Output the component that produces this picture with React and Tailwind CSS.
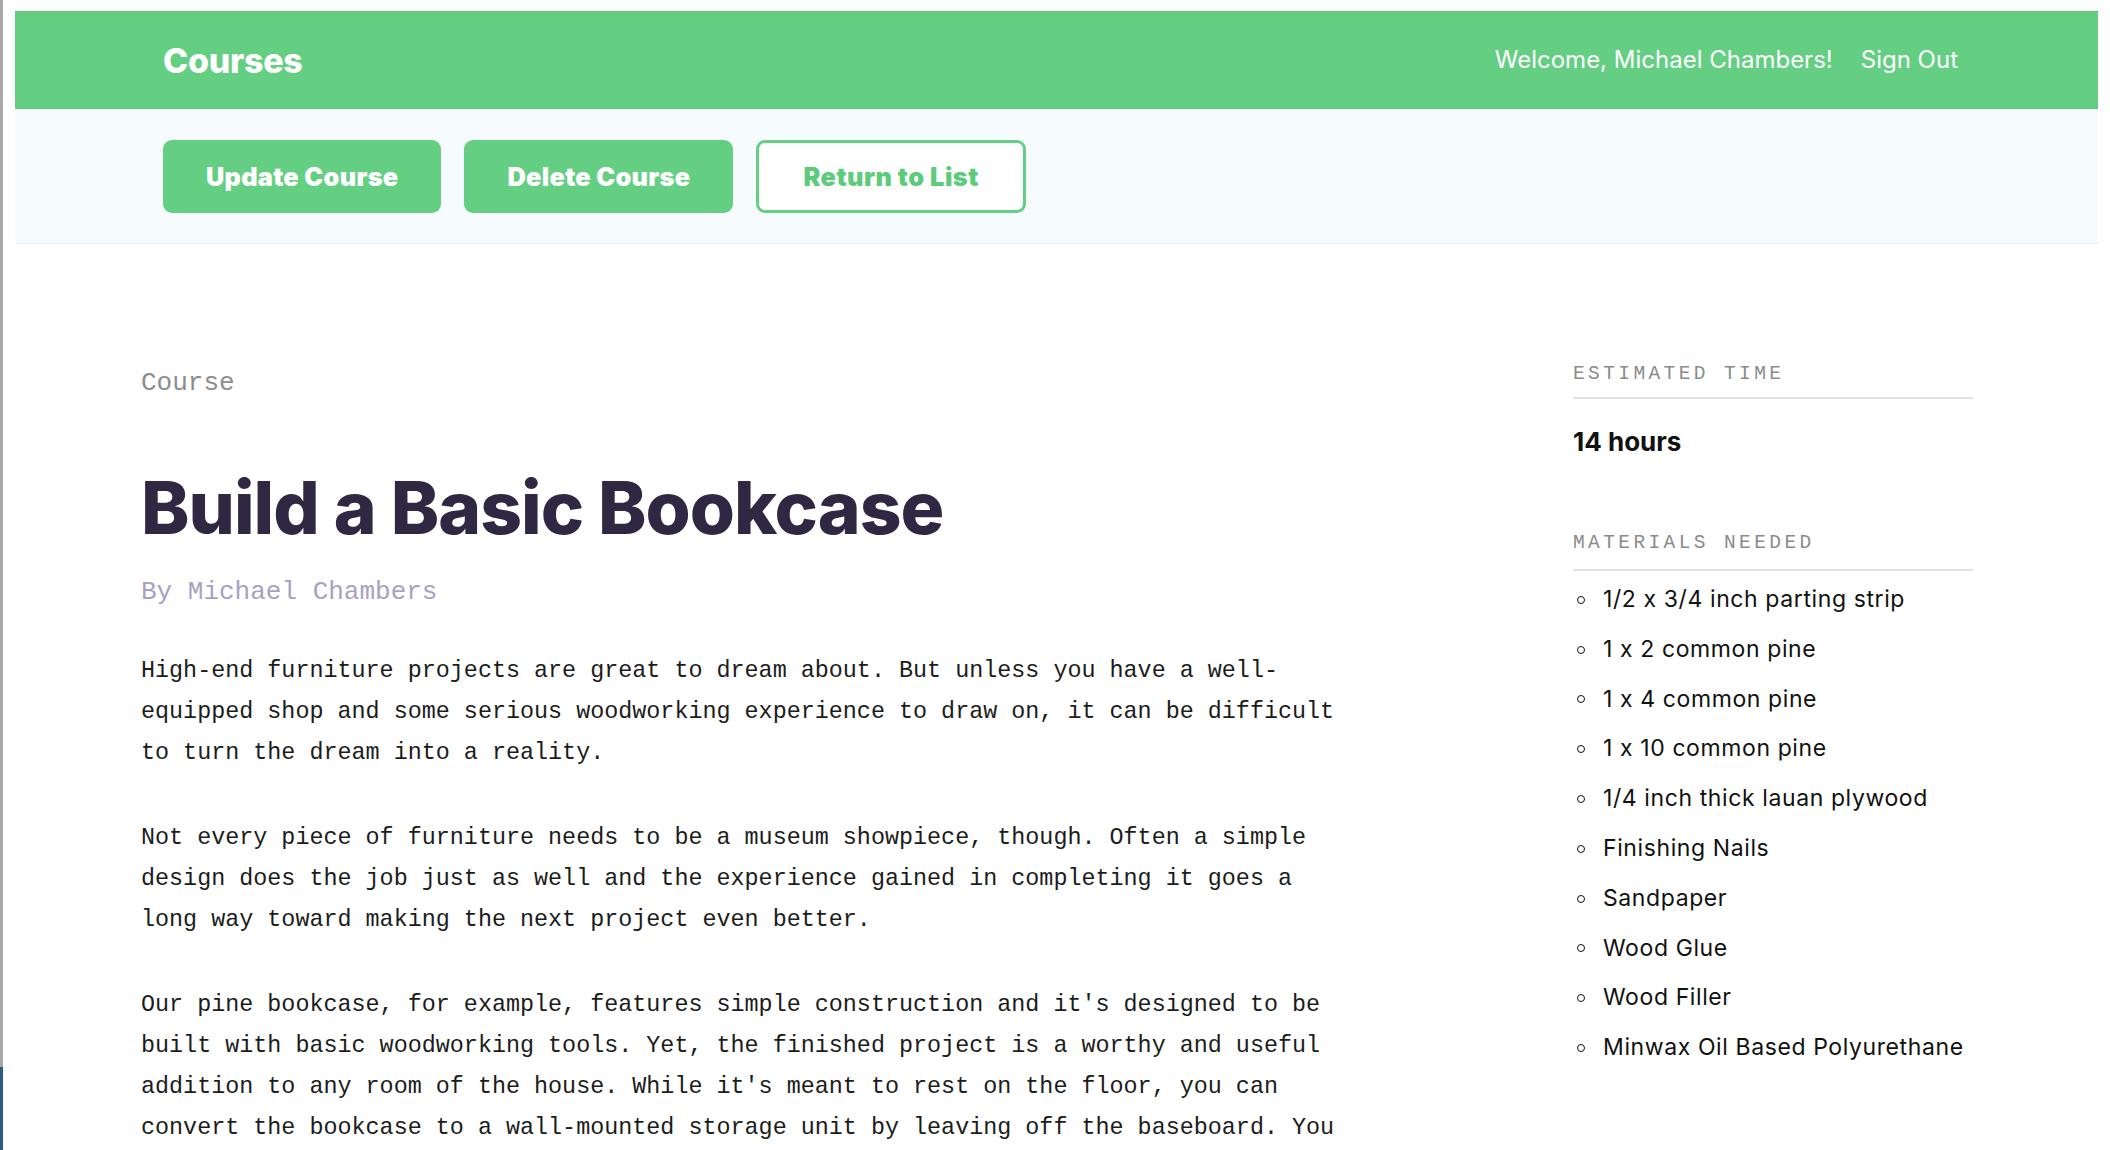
import React from "react";

const materials = [
  "1/2 x 3/4 inch parting strip",
  "1 x 2 common pine",
  "1 x 4 common pine",
  "1 x 10 common pine",
  "1/4 inch thick lauan plywood",
  "Finishing Nails",
  "Sandpaper",
  "Wood Glue",
  "Wood Filler",
  "Minwax Oil Based Polyurethane",
];

const paragraphs = [
  "High-end furniture projects are great to dream about. But unless you have a well-equipped shop and some serious woodworking experience to draw on, it can be difficult to turn the dream into a reality.",
  "Not every piece of furniture needs to be a museum showpiece, though. Often a simple design does the job just as well and the experience gained in completing it goes a long way toward making the next project even better.",
  "Our pine bookcase, for example, features simple construction and it's designed to be built with basic woodworking tools. Yet, the finished project is a worthy and useful addition to any room of the house. While it's meant to rest on the floor, you can convert the bookcase to a wall-mounted storage unit by leaving off the baseboard. You can also add a back to the bookcase for extra stability.",
];

const sans = "font-['Inter','Noto_Sans',sans-serif] [font-variant-ligatures:no-contextual]";
const mono = "font-['Liberation_Mono','DejaVu_Sans_Mono',monospace]";

export default function App() {
  return (
    <div className="flex h-[1150px] w-full overflow-hidden bg-white">
      <div className="flex w-[3px] shrink-0 flex-col">
        <div className="flex-1 bg-[#a9a9a9]" />
        <div className="h-[83px] bg-[#2b5a8a]" />
      </div>
      <div className="flex min-w-0 flex-1 flex-col pl-[12px] pr-[12px] pt-[11px]">
        <div className="flex flex-1 flex-col overflow-hidden">
          {/* Header */}
          <header className={`flex h-[98px] shrink-0 items-center justify-between border-y border-[#5bc57a] bg-[#64cf83] pl-[148px] pr-[140px] text-white ${sans}`}>
            <div className="text-[34px] font-extrabold tracking-[-0.3px]">Courses</div>
            <nav className="flex items-center gap-[28px] text-[24px]">
              <span>Welcome, Michael Chambers!</span>
              <span>Sign Out</span>
            </nav>
          </header>

          {/* Action bar */}
          <div className={`flex shrink-0 gap-[23px] border-b border-[#dff4f7] bg-[#f6fbfd] pl-[148px] pb-[30px] pt-[31px] ${sans}`}>
            <button className="h-[73px] rounded-[9px] bg-[#64cf83] px-[43px] text-[25.3px] font-black tracking-[0.3px] text-white">
              Update Course
            </button>
            <button className="h-[73px] rounded-[9px] bg-[#64cf83] px-[43px] text-[25.3px] font-black tracking-[0.3px] text-white">
              Delete Course
            </button>
            <button className="h-[73px] rounded-[9px] border-[3px] border-[#64cf83] bg-white px-[44px] text-[25.3px] font-black tracking-[0.5px] text-[#5ccb7c]">
              Return to List
            </button>
          </div>

          {/* Main */}
          <main className="flex gap-[232px] pl-[126px]">
            <div className="w-[1200px] shrink-0 pt-[120px]">
              <div className={`text-[26px] leading-[39px] text-[#8d8d8d] ${mono}`}>Course</div>
              <h1 className={`mt-[62px] text-[73px] font-extrabold leading-[86px] tracking-[-1px] text-[#302842] ${sans}`}>
                Build a Basic Bookcase
              </h1>
              <div className={`mt-[22px] text-[26px] leading-[39px] text-[#a9a1c3] ${mono}`}>By Michael Chambers</div>
              <div className={`mt-[39px] flex flex-col gap-[44px] text-[23.4px] leading-[41px] text-[#1c1c1c] ${mono}`}>
                {paragraphs.map((p, i) => (
                  <p key={i}>{p}</p>
                ))}
              </div>
            </div>

            <aside className="w-[400px] shrink-0 pt-[117px]">
              <div className={`border-b-2 border-[#e3e3e3] pb-[9px] text-[19.5px] leading-[27px] tracking-[3.4px] text-[#8b8b8b] ${mono}`}>
                ESTIMATED TIME
              </div>
              <div className={`mt-[25px] text-[26px] font-bold leading-[36px] text-[#111] ${sans}`}>14 hours</div>
              <div className={`mt-[70px] border-b-2 border-[#e3e3e3] pb-[12px] text-[19.5px] leading-[27px] tracking-[3.4px] text-[#8b8b8b] ${mono}`}>
                MATERIALS NEEDED
              </div>
              <ul className={`mt-[4px] text-[23px] leading-[49.8px] tracking-[0.6px] text-[#111] ${sans}`}>
                {materials.map((m) => (
                  <li key={m} className="flex items-center">
                    <span className="ml-[4px] mr-[18px] h-[8px] w-[8px] shrink-0 rounded-full border-[1.5px] border-[#111]" />
                    <span>{m}</span>
                  </li>
                ))}
              </ul>
            </aside>
          </main>
        </div>
      </div>
    </div>
  );
}
